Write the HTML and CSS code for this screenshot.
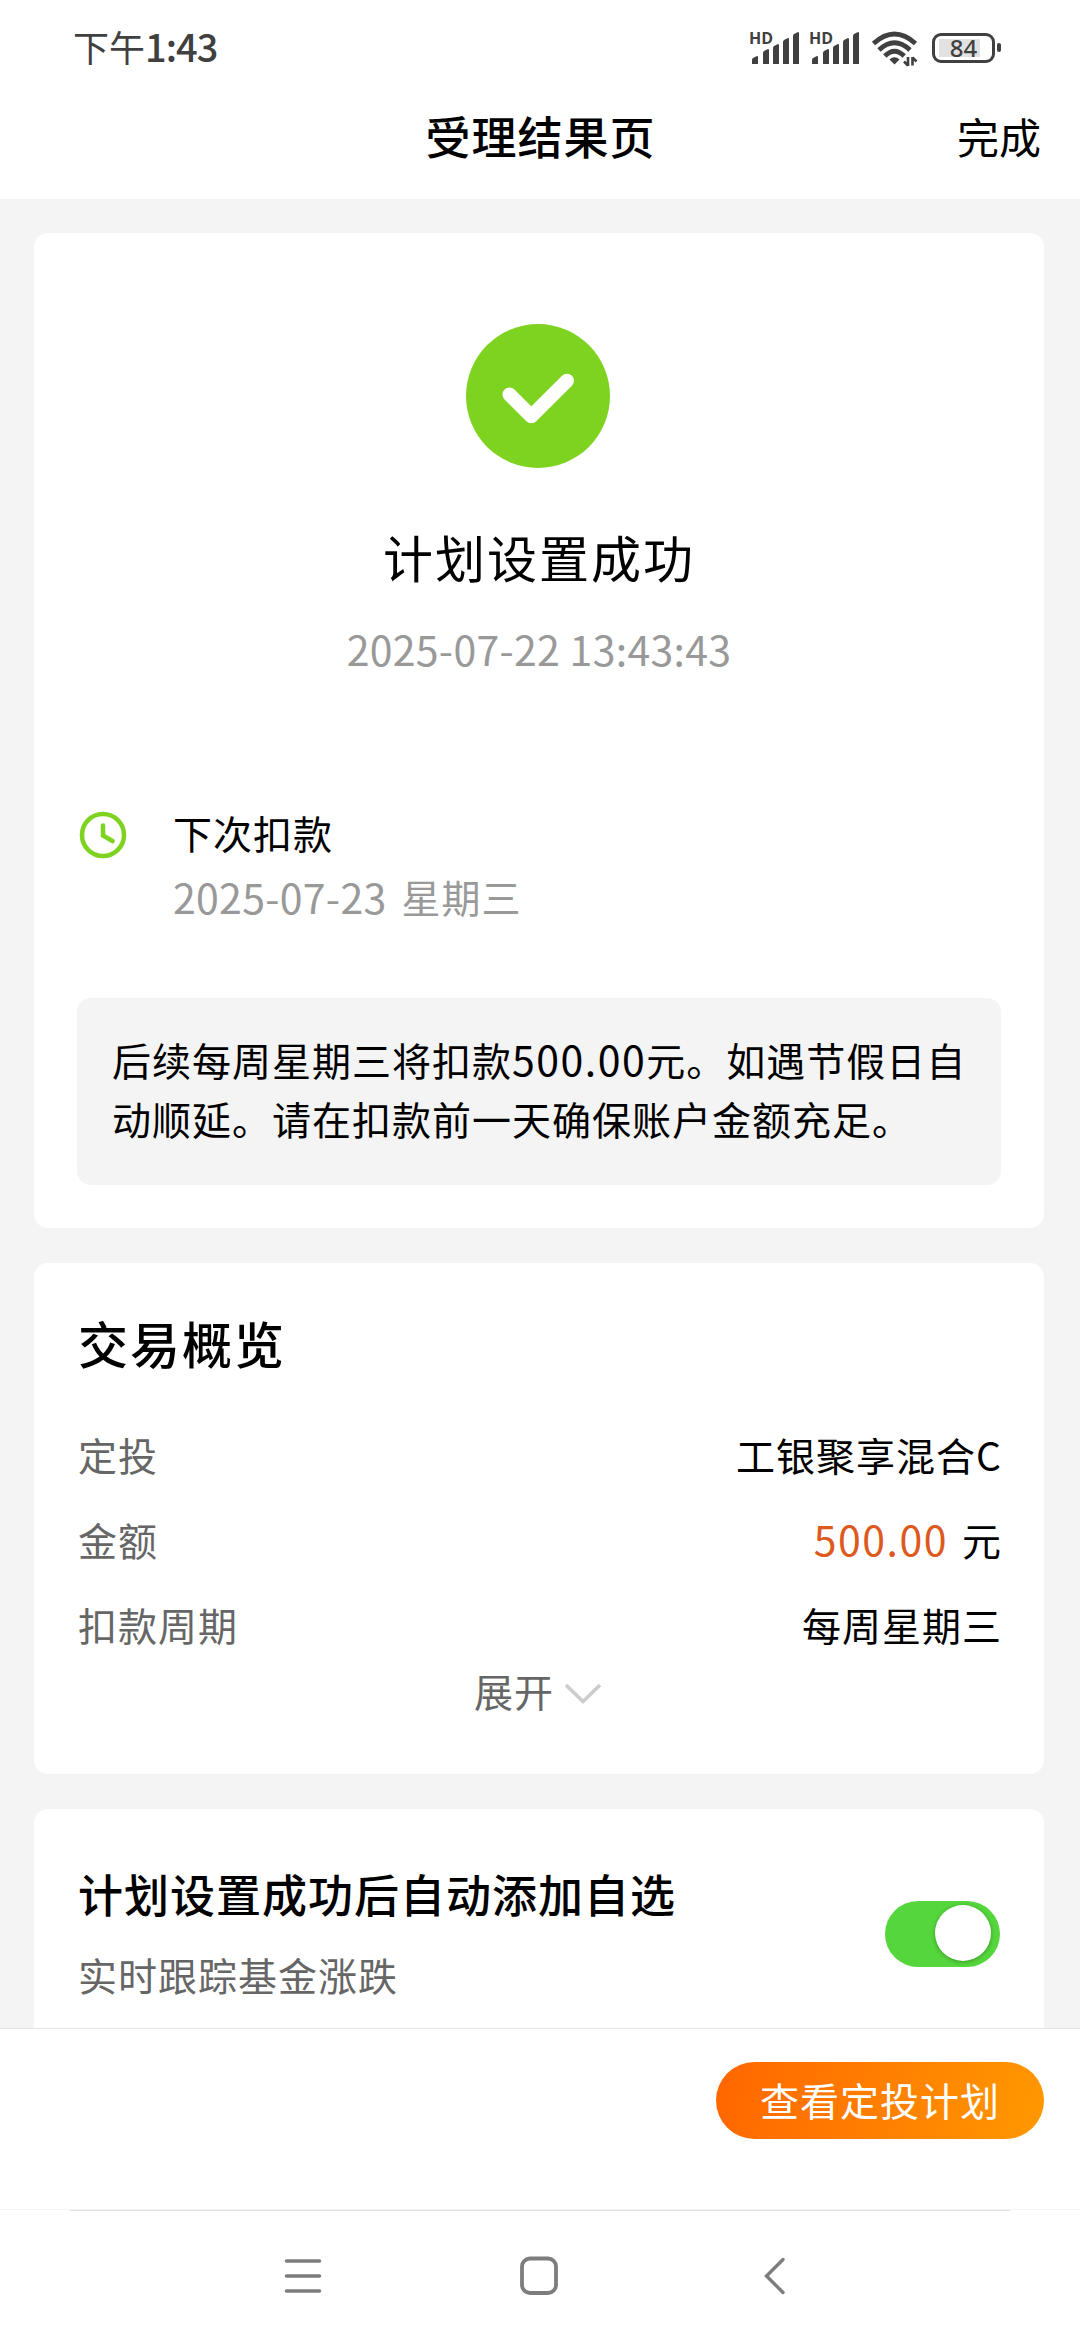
FILE: index.html
```html
<!DOCTYPE html>
<html lang="zh-CN">
<head>
  <meta charset="UTF-8">
  <meta name="viewport" content="width=device-width, initial-scale=1.0">
  <title>受理结果页</title>
  <link rel="stylesheet" href="styles.css">
</head>
<body>
<div class="phone">
  <div class="status-bar">
    <div class="time">下午<span class="clock">1:43</span></div>
    <div class="status-icons">
      <div class="signal">
        <span class="hd">HD</span>
        <svg width="50" height="34" viewBox="0 0 50 34" fill="#404040">
          <path d="M1 33v-4q0-1 1-2l4-2q1 0 1 1v7zM12 33V22q0-1 1-2l4-2q1 0 1 1v14zM22 33V17q0-1 1-2l4-2q1 0 1 1v19zM32 33V11q0-1 1-2l4-2q1 0 1 1v25zM42 33V5q0-1 1-2l4-2q1 0 1 1v31z"/>
        </svg>
      </div>
      <div class="signal">
        <span class="hd">HD</span>
        <svg width="50" height="34" viewBox="0 0 50 34" fill="#404040">
          <path d="M1 33v-4q0-1 1-2l4-2q1 0 1 1v7zM12 33V22q0-1 1-2l4-2q1 0 1 1v14zM22 33V17q0-1 1-2l4-2q1 0 1 1v19zM32 33V11q0-1 1-2l4-2q1 0 1 1v25zM42 33V5q0-1 1-2l4-2q1 0 1 1v31z"/>
        </svg>
      </div>
      <svg class="wifi" width="48" height="36" viewBox="0 0 48 36" fill="none" stroke="#404040" stroke-width="4.8">
        <path d="M2.500 12.500Q23.500 -6.500 44.500 12.500"/>
        <path d="M8 19Q23.500 4.500 39 19"/>
        <path d="M13.800 25Q23.500 15.500 33.200 25"/>
        <path d="M18.500 28.500Q23.500 24 28.500 28.500L23.500 33.500z" fill="#404040" stroke="none"/>
        <path d="M37 26v9M33 30.500l4 4M41.500 34.500v-8.500M41.500 26.500l4 4" stroke-width="2.600"/>
      </svg>
      <div class="battery"><span>84</span></div>
      <i class="battery-cap"></i>
    </div>
  </div>

  <div class="header">
    <span></span>
    <h1>受理结果页</h1>
    <a class="done">完成</a>
  </div>

  <div class="content">
    <div class="card result">
      <svg class="success" width="144" height="144" viewBox="0 0 144 144">
        <circle cx="72" cy="72" r="72" fill="#7ed321"/>
        <path d="M43.500 70.500L65.300 92.300L101 56.700" fill="none" stroke="#fff" stroke-width="14" stroke-linecap="round" stroke-linejoin="round"/>
      </svg>
      <div class="result-title">计划设置成功</div>
      <div class="result-time date">2025-07-22 13:43:43</div>

      <div class="next">
        <svg width="48" height="48" viewBox="0 0 48 48" fill="none" stroke="#7ed321">
          <circle cx="24" cy="24" r="21" stroke-width="4.500"/>
          <path d="M24 14.500V24.500L33.500 30" stroke-width="4.600" stroke-linecap="round" stroke-linejoin="round"/>
        </svg>
        <div class="next-text">
          <div class="next-title">下次扣款</div>
          <div class="next-date"><span class="date">2025-07-23</span><span>星期三</span></div>
        </div>
      </div>

      <div class="tip">后续每周星期三将扣款<span class="num">500.00</span>元。如遇节假日自<br>动顺延。请在扣款前一天确保账户金额充足。</div>
    </div>

    <div class="card overview">
      <h2>交易概览</h2>
      <div class="row"><span class="label">定投</span><span class="value">工银聚享混合C</span></div>
      <div class="row"><span class="label">金额</span><span class="value"><span class="amount num">500.00</span>元</span></div>
      <div class="row"><span class="label">扣款周期</span><span class="value">每周星期三</span></div>
      <div class="expand">
        <span>展开</span>
        <svg width="38" height="22" viewBox="0 0 38 22" fill="none" stroke="#ccc" stroke-width="3.600">
          <path d="M2 2L19 18.500L36 2"/>
        </svg>
      </div>
    </div>

    <div class="card favorite">
      <div>
        <h3>计划设置成功后自动添加自选</h3>
        <p>实时跟踪基金涨跌</p>
      </div>
      <div class="switch"><i></i></div>
    </div>
  </div>

  <div class="footer">
    <button class="view-btn">查看定投计划</button>
  </div>

  <div class="nav">
    <div class="nav-line"></div>
    <div class="nav-keys">
      <svg width="44" height="44" viewBox="0 0 44 44" fill="none" stroke="#7d7d7d" stroke-width="3.600" stroke-linecap="round">
        <path d="M5.500 7h33M5.500 22h33M5.500 37h33"/>
      </svg>
      <svg width="44" height="44" viewBox="0 0 44 44" fill="none" stroke="#7d7d7d" stroke-width="3.800">
        <rect x="5" y="4.500" width="34" height="34.500" rx="8"/>
      </svg>
      <svg width="44" height="44" viewBox="0 0 44 44" fill="none" stroke="#7d7d7d" stroke-width="3.400" stroke-linecap="round">
        <path d="M31 5.500L14.500 22L31 38.500"/>
      </svg>
    </div>
  </div>
</div>
</body>
</html>
```
FILE: styles.css
```css
* {
  box-sizing: border-box;
}
body {
  margin: 0;
  font-family: "Noto Sans CJK SC", sans-serif;
  font-size: 39px;
  letter-spacing: 1px;
  color: #000;
  background: #f4f4f4;
}
h1, h2, h3, p {
  margin: 0;
  font-weight: 500;
}
svg {
  display: block;
  flex: none;
}
.phone {
  width: 1080px;
  height: 2340px;
  display: flex;
  flex-direction: column;
  overflow: hidden;
}
.num {
  font-size: 41px;
  letter-spacing: 1.5px;
  line-height: 1;
}
.date {
  font-size: 41px;
  letter-spacing: 0.3px;
}

/* status bar */
.status-bar {
  height: 92px;
  background: #fff;
  display: flex;
  justify-content: space-between;
  padding: 0 79px 0 73px;
  color: #404040;
}
.time {
  font-size: 36px;
  letter-spacing: 0;
  line-height: 92px;
}
.clock {
  font-size: 38px;
  font-weight: 500;
  letter-spacing: -1px;
}
.status-icons {
  display: flex;
  align-items: flex-start;
  padding-top: 31px;
}
.signal {
  position: relative;
  width: 50px;
  margin-right: 10px;
}
.hd {
  position: absolute;
  left: -2px;
  top: 1px;
  font-family: "Open Sans", sans-serif;
  font-size: 16px;
  font-weight: 700;
  letter-spacing: 0;
  line-height: 12px;
}
.wifi {
  margin: 0 13px 0 0;
}
.battery {
  margin-top: 2px;
  width: 63px;
  height: 30px;
  border: 3px solid #404040;
  border-radius: 9px;
  padding: 3px 11px 3px 4px;
}
.battery span {
  display: block;
  width: 49px;
  height: 18px;
  background: linear-gradient(90deg, #e2e2e2 41px, transparent 41px);
  font-family: "Noto Sans", sans-serif;
  font-size: 24px;
  font-weight: 500;
  letter-spacing: 0;
  line-height: 18px;
  text-align: center;
}
.battery-cap {
  width: 4px;
  height: 9px;
  margin: 12px 0 0 2px;
  border-radius: 2px;
  background: #404040;
}

/* header */
.header {
  height: 107px;
  background: #fff;
  display: grid;
  grid-template-columns: 1fr auto 1fr;
  line-height: 88px;
  padding: 0 39px 0 40px;
}
.header h1 {
  font-size: 45px;
}
.done {
  font-size: 42px;
  letter-spacing: 0;
  text-align: right;
}

/* cards */
.content {
  height: 1829px;
  padding: 34px 36px 0 34px;
  overflow: hidden;
}
.card {
  background: #fff;
  border-radius: 14px;
  margin-bottom: 35px;
}
.result {
  height: 995px;
  padding: 91px 43px 0;
}
.success {
  margin: 0 auto 0 389px;
}
.result-title {
  margin-top: 48px;
  font-size: 50px;
  letter-spacing: 2px;
  line-height: 80px;
  text-align: center;
}
.result-time {
  margin-top: 27px;
  line-height: 50px;
  color: #999;
  text-align: center;
}
.next {
  display: flex;
  margin-top: 127px;
}
.next svg {
  margin: 11px 46px 0 2px;
}
.next-text {
  line-height: 64px;
}
.next-date {
  display: flex;
  gap: 15px;
  color: #999;
}
.tip {
  margin-top: 70px;
  height: 187px;
  padding: 32px 30px 0 35px;
  border-radius: 14px;
  background: #f4f4f4;
  line-height: 59px;
}
.overview {
  height: 511px;
  padding: 39px 42px 0 44px;
}
.overview h2 {
  font-size: 50px;
  letter-spacing: 2px;
  line-height: 80px;
}
.row {
  display: flex;
  justify-content: space-between;
  line-height: 85px;
}
.row:nth-child(2) {
  margin-top: 30px;
}
.label, .expand {
  color: #666;
}
.amount {
  margin-right: 14px;
  color: #dd5a1e;
}
.expand {
  display: flex;
  align-items: center;
  justify-content: center;
  gap: 10px;
  padding-right: 4px;
  line-height: 46px;
}
.expand svg {
  margin-top: 8px;
}
.favorite {
  height: 260px;
  padding: 50px 44px 0;
  display: flex;
  justify-content: space-between;
}
.favorite h3 {
  font-size: 45px;
  line-height: 70px;
}
.favorite p {
  margin-top: 10px;
  font-weight: 400;
  color: #666;
  line-height: 70px;
}
.switch {
  width: 115px;
  height: 66px;
  margin-top: 42px;
  padding: 4px 9px;
  border-radius: 33px;
  background: #54d63c;
  display: flex;
  justify-content: flex-end;
}
.switch i {
  width: 56px;
  height: 56px;
  border-radius: 50%;
  background: #fff;
  box-shadow: 0 1px 4px rgba(0, 0, 0, 0.3);
}

/* bottom action */
.footer {
  height: 181px;
  background: #fff;
  border-top: 1px solid #e6e6e6;
  padding: 33px 36px 0 0;
  display: flex;
  justify-content: flex-end;
  align-items: flex-start;
}
.view-btn {
  width: 328px;
  height: 77px;
  padding: 0 0 3px;
  border: none;
  border-radius: 39px;
  background: linear-gradient(100deg, #ff6600, #ff9800);
  color: #fff;
  font: inherit;
  letter-spacing: 1px;
  line-height: 72px;
}

/* system navigation */
.nav {
  flex: 1;
  background: #fff;
  border-top: 1px solid #f3f3f3;
}
.nav-line {
  height: 1px;
  margin: 0 70px;
  background: #e0e0e0;
}
.nav-keys {
  display: flex;
  justify-content: space-between;
  padding: 43px 284px 0 281px;
}
```
